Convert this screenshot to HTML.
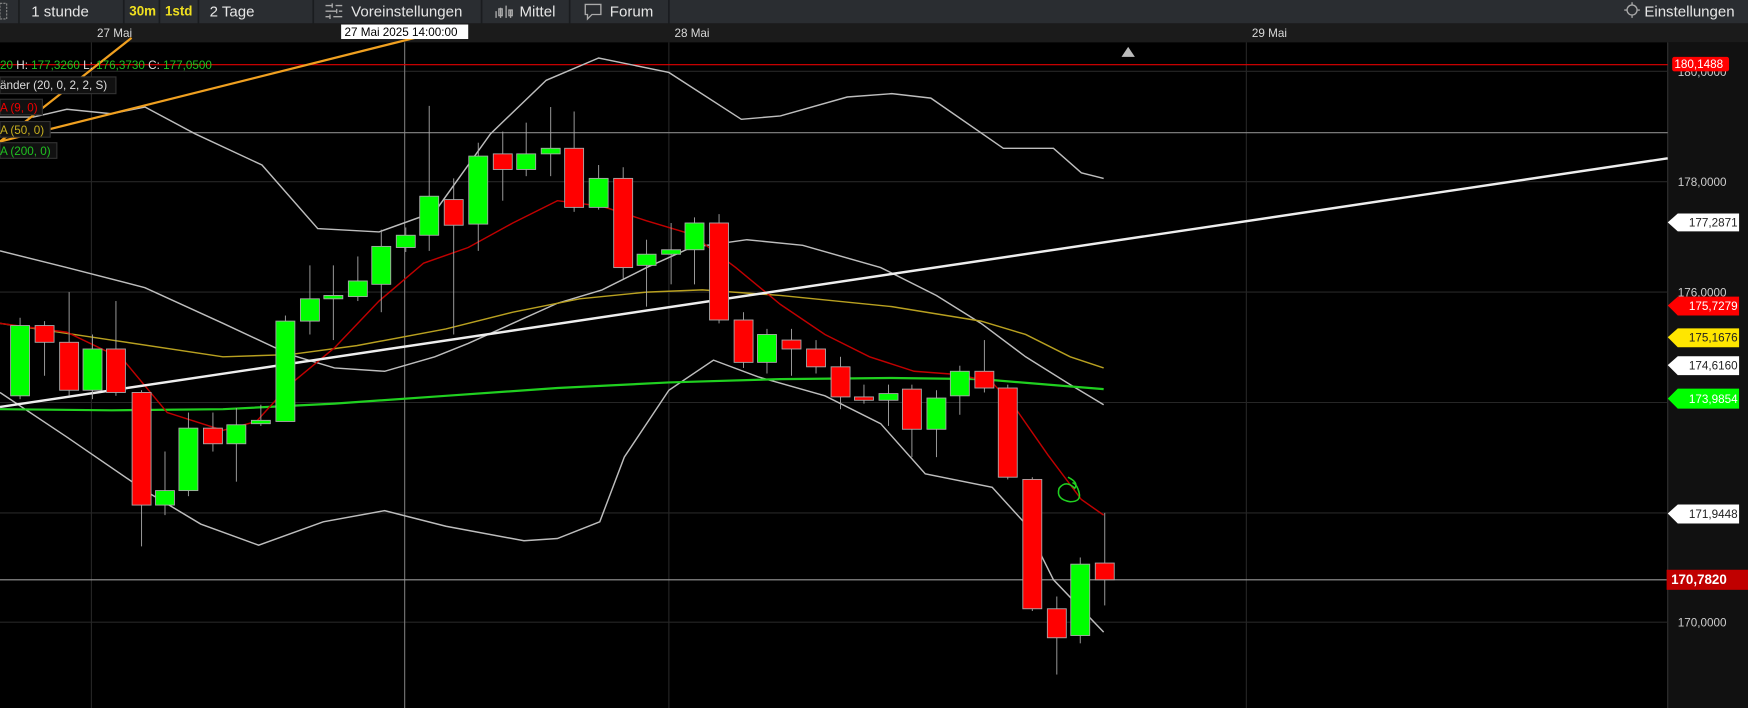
<!DOCTYPE html>
<html><head><meta charset="utf-8"><style>
html,body{margin:0;padding:0;background:#000;width:1748px;height:708px;overflow:hidden}
svg{display:block;font-family:"Liberation Sans",sans-serif}
</style></head><body>
<svg width="1748" height="708" viewBox="0 0 1568 635" preserveAspectRatio="none" xmlns="http://www.w3.org/2000/svg">
<rect width="1568" height="635" fill="#000"/>
<!-- header -->
<rect x="0" y="0" width="1568" height="21" fill="#2a2d31"/>
<g stroke="#1a1c1f" stroke-width="1.5">
<line x1="17" y1="0" x2="17" y2="21"/><line x1="111" y1="0" x2="111" y2="21"/><line x1="143" y1="0" x2="143" y2="21"/><line x1="178" y1="0" x2="178" y2="21"/><line x1="281" y1="0" x2="281" y2="21"/><line x1="432" y1="0" x2="432" y2="21"/><line x1="511" y1="0" x2="511" y2="21"/><line x1="600" y1="0" x2="600" y2="21"/>
</g>
<rect x="0" y="3" width="6" height="14" fill="none" stroke="#888" stroke-dasharray="2,1"/>
<g fill="#e6e6e6" font-size="13.5">
<text x="28" y="15">1 stunde</text>
<text x="188" y="15">2 Tage</text>
<text x="315" y="15">Voreinstellungen</text>
<text x="466" y="15">Mittel</text>
<text x="547" y="15">Forum</text>
<text x="1475" y="15">Einstellungen</text>
</g>
<text x="116" y="14" fill="#f0e020" font-size="12" font-weight="bold">30m</text>
<text x="148" y="14" fill="#f0e020" font-size="12" font-weight="bold">1std</text>
<g stroke="#aaa" stroke-width="1.2" fill="none">
<path d="M292 5h6M301 5h6M292 10h10M304 10h3M292 15h4M299 15h8M298 3v4M302 8v4M296 13v4"/>
<path d="M445 16v-6M449 16v-9M454 16v-11M458 16v-7"/>
<rect x="447.5" y="8" width="3" height="6"/><rect x="456.5" y="9" width="3" height="5"/>
<path d="M525 4h14v9h-8l-4 4v-4h-2z"/>
<circle cx="1464" cy="9" r="4.5"/><path d="M1457 9h2M1469 9h2M1464 2v2M1464 14v2"/>
</g>
<!-- date axis -->
<rect x="0" y="21" width="1568" height="17" fill="#1b1b1b"/>
<g fill="#d8d8d8" font-size="10.5"><text x="87" y="33">27 Mai</text><text x="605" y="33">28 Mai</text><text x="1123" y="33">29 Mai</text></g>
<!-- right axis -->
<rect x="1496" y="38" width="72" height="597" fill="#111"/>
<line x1="1496" y1="38" x2="1496" y2="635" stroke="#333"/>
<!-- grid -->
<g stroke="#262626" stroke-width="1">
<line x1="82" y1="38" x2="82" y2="635"/><line x1="600" y1="38" x2="600" y2="635"/><line x1="1118" y1="38" x2="1118" y2="635"/>
<line x1="0" y1="64" x2="1496" y2="64"/><line x1="0" y1="163" x2="1496" y2="163"/><line x1="0" y1="262" x2="1496" y2="262"/><line x1="0" y1="361" x2="1496" y2="361"/><line x1="0" y1="460" x2="1496" y2="460"/><line x1="0" y1="558" x2="1496" y2="558"/>
</g>
<line x1="363" y1="38" x2="363" y2="635" stroke="#777"/>
<line x1="0" y1="119" x2="1496" y2="119" stroke="#888"/>
<line x1="0" y1="520" x2="1496" y2="520" stroke="#999"/>
<line x1="0" y1="58" x2="1496" y2="58" stroke="#e00000"/>
<!-- bollinger -->
<g fill="none" stroke="#bdbdbd" stroke-width="1.3">
<polyline points="0,105 30,105 60,98 100,102 130,96 175,120 235,148 285,205 340,208 390,190 440,120 490,72 537,52 600,65 665,107 700,104 760,87 800,84 835,88 900,133 945,133 970,155 990,160"/>
<polyline points="0,225 60,240 130,258 200,290 260,318 300,330 345,333 390,320 420,308 460,290 500,272 540,260 580,240 620,222 670,215 720,220 790,240 840,265 880,290 920,320 960,345 990,363"/>
<polyline points="0,352 60,392 130,440 180,470 232,489 290,468 345,458 400,472 470,485 500,483 538,468 560,410 600,350 640,323 680,338 740,355 790,380 830,425 890,437 920,470 945,520 990,567"/>
</g>
<polyline fill="none" stroke="#b8a020" stroke-width="1.3" points="0,290 100,305 200,320 260,318 320,310 400,295 460,280 520,268 580,262 630,260 700,265 800,275 880,288 920,300 960,320 990,330"/>
<polyline fill="none" stroke="#20d020" stroke-width="2" points="0,367 100,368 200,367 300,362 400,355 500,348 600,343 700,340 800,339 880,340 940,345 990,349"/>
<polyline fill="none" stroke="#c00000" stroke-width="1.3" points="0,290 60,298 110,322 150,370 200,386 230,378 260,345 300,312 340,270 380,236 420,222 460,200 500,180 540,185 580,198 620,210 660,240 700,273 740,300 780,320 820,333 860,336 890,343 910,365 940,408 970,448 990,462"/>
<line x1="0" y1="365" x2="1496" y2="142" stroke="#eee" stroke-width="2.2"/>
<g stroke="#f0a020" stroke-width="2"><line x1="0" y1="127" x2="118" y2="34"/><line x1="0" y1="127" x2="372" y2="34"/></g>
<!-- candles -->
<g stroke="#aaa" stroke-width="0.8">
<line x1="18" y1="285" x2="18" y2="358"/><rect x="9.5" y="292" width="17" height="63" fill="#0f0"/>
<line x1="40" y1="288" x2="40" y2="337"/><rect x="31.5" y="292" width="17" height="15" fill="#f00"/>
<line x1="62" y1="262" x2="62" y2="355"/><rect x="53.5" y="307" width="17" height="43" fill="#f00"/>
<line x1="83" y1="300" x2="83" y2="358"/><rect x="74.5" y="313" width="17" height="37" fill="#0f0"/>
<line x1="104" y1="270" x2="104" y2="355"/><rect x="95.5" y="313" width="17" height="39" fill="#f00"/>
<line x1="127" y1="350" x2="127" y2="490"/><rect x="118.5" y="352" width="17" height="101" fill="#f00"/>
<line x1="148" y1="405" x2="148" y2="462"/><rect x="139.5" y="440" width="17" height="13" fill="#0f0"/>
<line x1="169" y1="370" x2="169" y2="445"/><rect x="160.5" y="384" width="17" height="56" fill="#0f0"/>
<line x1="191" y1="370" x2="191" y2="405"/><rect x="182.5" y="384" width="17" height="14" fill="#f00"/>
<line x1="212" y1="366" x2="212" y2="432"/><rect x="203.5" y="381" width="17" height="17" fill="#0f0"/>
<line x1="234" y1="363" x2="234" y2="382"/><rect x="225.5" y="377" width="17" height="3" fill="#0f0"/>
<line x1="256" y1="283" x2="256" y2="378"/><rect x="247.5" y="288" width="17" height="90" fill="#0f0"/>
<line x1="278" y1="238" x2="278" y2="300"/><rect x="269.5" y="268" width="17" height="20" fill="#0f0"/>
<line x1="299" y1="238" x2="299" y2="305"/><rect x="290.5" y="265" width="17" height="3" fill="#0f0"/>
<line x1="321" y1="230" x2="321" y2="270"/><rect x="312.5" y="252" width="17" height="14" fill="#0f0"/>
<line x1="342" y1="206" x2="342" y2="280"/><rect x="333.5" y="221" width="17" height="34" fill="#0f0"/>
<line x1="364" y1="204" x2="364" y2="226"/><rect x="355.5" y="211" width="17" height="11" fill="#0f0"/>
<line x1="385" y1="95" x2="385" y2="225"/><rect x="376.5" y="176" width="17" height="35" fill="#0f0"/>
<line x1="407" y1="160" x2="407" y2="300"/><rect x="398.5" y="179" width="17" height="23" fill="#f00"/>
<line x1="429" y1="128" x2="429" y2="225"/><rect x="420.5" y="140" width="17" height="61" fill="#0f0"/>
<line x1="451" y1="118" x2="451" y2="180"/><rect x="442.5" y="138" width="17" height="14" fill="#f00"/>
<line x1="472" y1="110" x2="472" y2="158"/><rect x="463.5" y="138" width="17" height="14" fill="#0f0"/>
<line x1="494" y1="96" x2="494" y2="158"/><rect x="485.5" y="133" width="17" height="5" fill="#0f0"/>
<line x1="515" y1="100" x2="515" y2="190"/><rect x="506.5" y="133" width="17" height="53" fill="#f00"/>
<line x1="537" y1="148" x2="537" y2="188"/><rect x="528.5" y="160" width="17" height="26" fill="#0f0"/>
<line x1="559" y1="150" x2="559" y2="250"/><rect x="550.5" y="160" width="17" height="80" fill="#f00"/>
<line x1="580" y1="215" x2="580" y2="275"/><rect x="571.5" y="228" width="17" height="10" fill="#0f0"/>
<line x1="602" y1="200" x2="602" y2="255"/><rect x="593.5" y="224" width="17" height="4" fill="#0f0"/>
<line x1="623" y1="195" x2="623" y2="255"/><rect x="614.5" y="200" width="17" height="24" fill="#0f0"/>
<line x1="645" y1="192" x2="645" y2="290"/><rect x="636.5" y="200" width="17" height="87" fill="#f00"/>
<line x1="667" y1="280" x2="667" y2="330"/><rect x="658.5" y="287" width="17" height="38" fill="#f00"/>
<line x1="688" y1="295" x2="688" y2="335"/><rect x="679.5" y="300" width="17" height="25" fill="#0f0"/>
<line x1="710" y1="295" x2="710" y2="337"/><rect x="701.5" y="305" width="17" height="8" fill="#f00"/>
<line x1="732" y1="305" x2="732" y2="335"/><rect x="723.5" y="313" width="17" height="16" fill="#f00"/>
<line x1="754" y1="320" x2="754" y2="367"/><rect x="745.5" y="329" width="17" height="27" fill="#f00"/>
<line x1="775" y1="345" x2="775" y2="362"/><rect x="766.5" y="356" width="17" height="3" fill="#f00"/>
<line x1="797" y1="345" x2="797" y2="382"/><rect x="788.5" y="353" width="17" height="6" fill="#0f0"/>
<line x1="818" y1="345" x2="818" y2="410"/><rect x="809.5" y="349" width="17" height="36" fill="#f00"/>
<line x1="840" y1="350" x2="840" y2="410"/><rect x="831.5" y="357" width="17" height="28" fill="#0f0"/>
<line x1="861" y1="328" x2="861" y2="372"/><rect x="852.5" y="333" width="17" height="22" fill="#0f0"/>
<line x1="883" y1="305" x2="883" y2="352"/><rect x="874.5" y="333" width="17" height="15" fill="#f00"/>
<line x1="904" y1="345" x2="904" y2="430"/><rect x="895.5" y="348" width="17" height="80" fill="#f00"/>
<line x1="926" y1="428" x2="926" y2="548"/><rect x="917.5" y="430" width="17" height="116" fill="#f00"/>
<line x1="948" y1="535" x2="948" y2="605"/><rect x="939.5" y="546" width="17" height="26" fill="#f00"/>
<line x1="969" y1="500" x2="969" y2="577"/><rect x="960.5" y="506" width="17" height="64" fill="#0f0"/>
<line x1="991" y1="460" x2="991" y2="543"/><rect x="982.5" y="505" width="17" height="15" fill="#f00"/>
</g>
<path d="M958 428 q10 5 6 10 q-8 -8 -14 0 q-3 10 10 12 q10 0 8 -8 q-2 -8 -6 -9" fill="none" stroke="#20d020" stroke-width="1.4"/>
<path d="M1006 51 l6 -9 l6 9z" fill="#bbb"/>
<!-- crosshair date label -->
<rect x="306" y="22" width="114" height="13" fill="#fff"/>
<text x="309" y="32.5" font-size="10.5" fill="#000">27 Mai 2025 14:00:00</text>
<!-- legend -->
<g font-size="10.5">
<text x="0" y="62" fill="#20c020">20 <tspan fill="#ddd">H:</tspan> 177,3260 <tspan fill="#ddd">L:</tspan> 176,3730 <tspan fill="#ddd">C:</tspan> 177,0500</text>
<rect x="0" y="69" width="104" height="15" fill="#111" stroke="#333"/>
<text x="0" y="80" fill="#ddd">änder (20, 0, 2, 2, S)</text>
<rect x="0" y="89" width="38" height="14" fill="#111" stroke="#333"/><text x="0" y="100" fill="#e00">A (9, 0)</text>
<rect x="0" y="109" width="45" height="14" fill="#111" stroke="#333"/><text x="0" y="120" fill="#c8b020">A (50, 0)</text>
<rect x="0" y="128" width="51" height="14" fill="#111" stroke="#333"/><text x="0" y="139" fill="#20c020">A (200, 0)</text>
</g>
<!-- price labels -->
<g font-size="10.5">
<text x="1505" y="68" fill="#ccc">180,0000</text>
<text x="1505" y="167" fill="#ccc">178,0000</text>
<text x="1505" y="266" fill="#ccc">176,0000</text>
<text x="1505" y="562" fill="#ccc">170,0000</text>
<rect x="1500" y="51" width="51" height="13" rx="2" fill="#f00"/><text x="1502" y="61" fill="#fff">180,1488</text>
<path d="M1496 199.5 l9 -8 h55 v16 h-55z" fill="#fff"/><text x="1515" y="203" fill="#222">177,2871</text>
<path d="M1496 274 l9 -8 h55 v17 h-55z" fill="#f00"/><text x="1515" y="278" fill="#fff">175,7279</text>
<path d="M1496 302.5 l9 -8 h55 v17 h-55z" fill="#ffe600"/><text x="1515" y="306.5" fill="#222">175,1676</text>
<path d="M1496 327.5 l9 -8 h55 v17 h-55z" fill="#fff"/><text x="1515" y="331.5" fill="#222">174,6160</text>
<path d="M1496 357.5 l9 -9 h55 v18 h-55z" fill="#0f0"/><text x="1515" y="361.5" fill="#fff">173,9854</text>
<path d="M1496 460.5 l9 -8 h55 v17 h-55z" fill="#fff"/><text x="1515" y="464.5" fill="#222">171,9448</text>
<rect x="1495" y="511" width="73" height="18" fill="#c00000"/><text x="1499" y="524" fill="#fff" font-weight="bold" font-size="12">170,7820</text>
</g>
</svg>
</body></html>
